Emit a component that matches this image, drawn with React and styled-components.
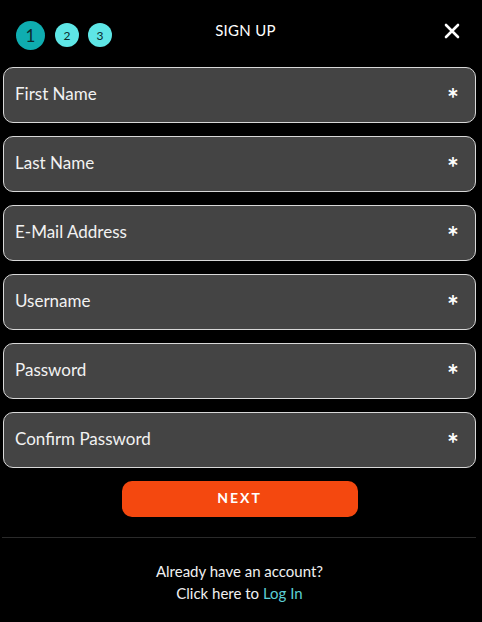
import styled, { createGlobalStyle } from "styled-components";

const GlobalStyle = createGlobalStyle`
  html, body {
    margin: 0;
    padding: 0;
    background: #000;
  }
  body {
    font-family: Lato, "Open Sans", sans-serif;
  }
`;

const Container = styled.div`
  width: 482px;
  height: 622px;
  background: #000;
  padding: 20px 6px 0 3px;
  box-sizing: border-box;
  display: flex;
  flex-direction: column;
`;

const Header = styled.div`
  height: 30px;
  display: grid;
  grid-template-columns: 1fr auto 1fr;
  align-items: center;
`;

const Steps = styled.div`
  display: flex;
  align-items: center;
  gap: 10px;
  padding-left: 13px;
`;

const Step = styled.div`
  width: ${(p) => (p.$active ? 29 : 24)}px;
  height: ${(p) => (p.$active ? 29 : 24)}px;
  border-radius: 50%;
  background: ${(p) => (p.$active ? "#0fadb0" : "#5ee6e6")};
  color: #0b2a2c;
  font-size: ${(p) => (p.$active ? 17 : 12)}px;
  display: flex;
  align-items: center;
  justify-content: center;
  margin-right: ${(p) => (p.$active ? 0 : -1)}px;
`;

const Title = styled.div`
  color: #fff;
  font-size: 15px;
  letter-spacing: 0.3px;
  margin: -10px 0 0 12px;
`;

const Close = styled.button`
  justify-self: end;
  background: none;
  border: none;
  padding: 0;
  margin-right: 16px;
  margin-top: -8px;
  width: 16px;
  height: 16px;
  display: flex;
  cursor: pointer;
`;

const Form = styled.div`
  margin-top: 17px;
  display: flex;
  flex-direction: column;
  gap: 13px;
`;

const Field = styled.div`
  height: 56px;
  box-sizing: border-box;
  border: 1px solid #d8d8d8;
  border-radius: 10px;
  background: #444;
  display: flex;
  align-items: center;
  justify-content: space-between;
  padding: 0 16px 3px 11px;
`;

const Label = styled.span`
  color: #f2f2f2;
  font-size: 17px;
`;

const Required = styled.span`
  color: #fff;
  font-size: 28px;
  font-weight: bold;
  line-height: 1;
  margin-top: 8px;
`;

const ButtonRow = styled.div`
  display: flex;
  justify-content: center;
  margin-top: 13px;
`;

const NextButton = styled.button`
  width: 236px;
  height: 36px;
  border: none;
  border-radius: 10px;
  background: #f4480f;
  color: #fff;
  font-family: Lato, sans-serif;
  font-size: 14px;
  font-weight: bold;
  letter-spacing: 2px;
  padding: 0 0 3px;
  cursor: pointer;
`;

const Divider = styled.hr`
  border: none;
  border-top: 1px solid #2a2a2a;
  margin: 20px 0 0 -1px;
`;

const Footer = styled.div`
  margin-top: 22px;
  text-align: center;
  color: #f0f0f0;
  font-size: 15px;
  line-height: 22px;
`;

const LoginLink = styled.a`
  color: #5ccfd6;
  text-decoration: none;
  cursor: pointer;
`;

const fields = [
  "First Name",
  "Last Name",
  "E-Mail Address",
  "Username",
  "Password",
  "Confirm Password",
];

function App() {
  return (
    <>
      <GlobalStyle />
      <Container>
        <Header>
          <Steps>
            <Step $active>1</Step>
            <Step>2</Step>
            <Step>3</Step>
          </Steps>
          <Title>SIGN UP</Title>
          <Close aria-label="close">
            <svg width="16" height="16" viewBox="0 0 16 16">
              <path d="M2 2 L14 14 M14 2 L2 14" stroke="#fff" strokeWidth="2.6" strokeLinecap="round" />
            </svg>
          </Close>
        </Header>

        <Form>
          {fields.map((f) => (
            <Field key={f}>
              <Label>{f}</Label>
              <Required>*</Required>
            </Field>
          ))}
        </Form>

        <ButtonRow>
          <NextButton>NEXT</NextButton>
        </ButtonRow>

        <Divider />

        <Footer>
          Already have an account?
          <br />
          Click here to <LoginLink>Log In</LoginLink>
        </Footer>
      </Container>
    </>
  );
}

export default App;
